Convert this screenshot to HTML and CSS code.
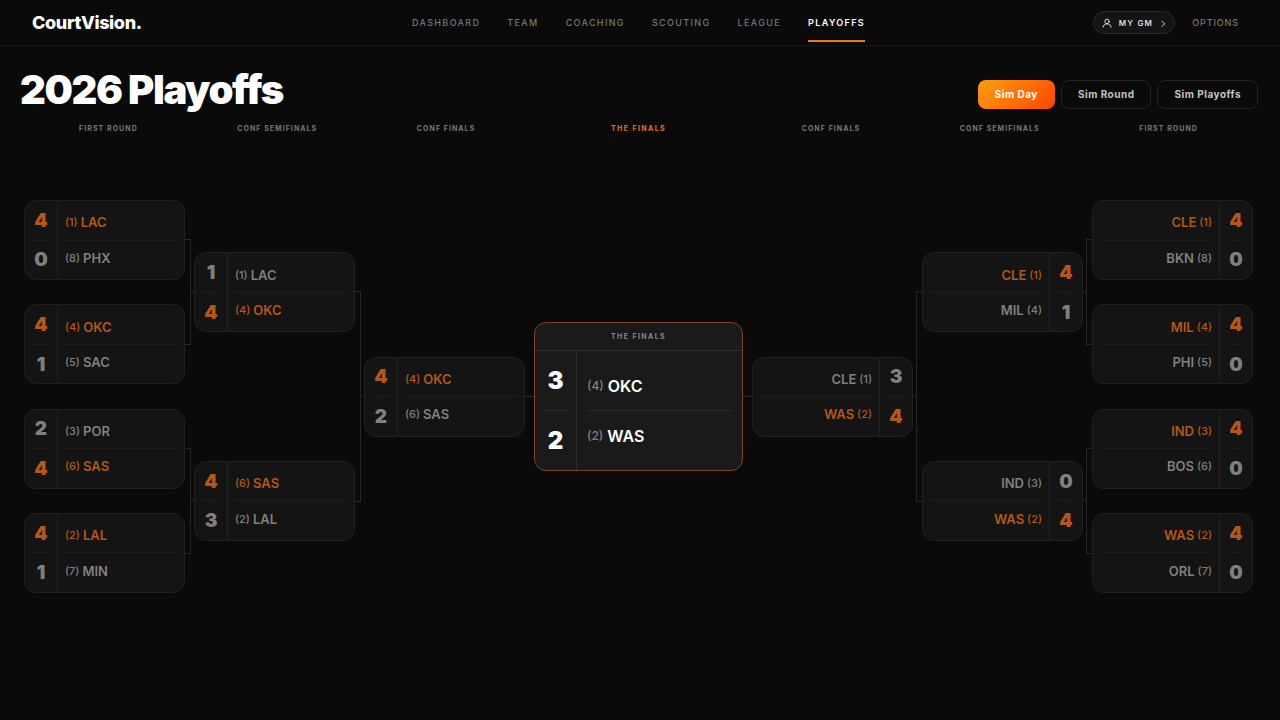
FILE: index.html
```
<!DOCTYPE html>
<html lang="en">

<head>
  <meta charset="UTF-8">
  <meta name="viewport" content="width=device-width, initial-scale=1.0">
  <title>CourtVision - 2026 Playoffs</title>
  <link rel="stylesheet" href="styles.css">
</head>

<body>

  <header class="topbar">
    <a class="logo" href="#">CourtVision.</a>
    <nav class="main-nav">
      <a href="#">Dashboard</a>
      <a href="#">Team</a>
      <a href="#">Coaching</a>
      <a href="#">Scouting</a>
      <a href="#">League</a>
      <a href="#" class="active">Playoffs</a>
    </nav>
    <div class="account">
      <button class="gm-button" type="button">
        <svg width="10" height="10" viewBox="0 0 10 10" fill="none" stroke="currentColor" stroke-linecap="round">
          <circle cx="5" cy="3.4" r="2.2" />
          <path d="M1 9.2C1.3 7.3 2.6 5.9 5 5.9S8.7 7.3 9 9.2" />
        </svg>
        My GM
        <svg width="6" height="8" viewBox="0 0 6 8" fill="none" stroke="currentColor" stroke-linecap="round" stroke-linejoin="round">
          <path d="M2 2.2L4.6 4.8L2 7.4" />
        </svg>
      </button>
      <a class="options" href="#">Options</a>
    </div>
  </header>

  <main>
    <div class="page-head">
      <h1>2026 Playoffs</h1>
      <div class="actions">
        <button class="btn primary" type="button">Sim Day</button>
        <button class="btn" type="button">Sim Round</button>
        <button class="btn" type="button">Sim Playoffs</button>
      </div>
    </div>

    <div class="round-labels">
      <span>First Round</span>
      <span>Conf Semifinals</span>
      <span>Conf Finals</span>
      <span class="current">The Finals</span>
      <span>Conf Finals</span>
      <span>Conf Semifinals</span>
      <span>First Round</span>
    </div>

    <div class="bracket">
      <!-- West -->
      <div class="round">
        <div class="series">
          <div class="scores"><b class="won">4</b><b>0</b></div>
          <div class="teams">
            <div class="team won"><small>(1)</small>LAC</div>
            <div class="team"><small>(8)</small>PHX</div>
          </div>
        </div>
        <div class="series">
          <div class="scores"><b class="won">4</b><b>1</b></div>
          <div class="teams">
            <div class="team won"><small>(4)</small>OKC</div>
            <div class="team"><small>(5)</small>SAC</div>
          </div>
        </div>
        <div class="series">
          <div class="scores"><b>2</b><b class="won">4</b></div>
          <div class="teams">
            <div class="team"><small>(3)</small>POR</div>
            <div class="team won"><small>(6)</small>SAS</div>
          </div>
        </div>
        <div class="series">
          <div class="scores"><b class="won">4</b><b>1</b></div>
          <div class="teams">
            <div class="team won"><small>(2)</small>LAL</div>
            <div class="team"><small>(7)</small>MIN</div>
          </div>
        </div>
      </div>

      <div class="joints">
        <div class="joint"></div>
        <div class="joint"></div>
      </div>

      <div class="round">
        <div class="series">
          <div class="scores"><b>1</b><b class="won">4</b></div>
          <div class="teams">
            <div class="team"><small>(1)</small>LAC</div>
            <div class="team won"><small>(4)</small>OKC</div>
          </div>
        </div>
        <div class="series">
          <div class="scores"><b class="won">4</b><b>3</b></div>
          <div class="teams">
            <div class="team won"><small>(6)</small>SAS</div>
            <div class="team"><small>(2)</small>LAL</div>
          </div>
        </div>
      </div>

      <div class="joints">
        <div class="joint tall"></div>
      </div>

      <div class="round">
        <div class="series">
          <div class="scores"><b class="won">4</b><b>2</b></div>
          <div class="teams">
            <div class="team won"><small>(4)</small>OKC</div>
            <div class="team"><small>(6)</small>SAS</div>
          </div>
        </div>
      </div>

      <div class="joints">
        <div class="line"></div>
      </div>

      <!-- Finals -->
      <div class="round">
        <section class="finals">
          <h2>The Finals</h2>
          <div class="finals-body">
            <div class="scores"><b>3</b><b>2</b></div>
            <div class="teams">
              <div class="team"><small>(4)</small>OKC</div>
              <div class="team"><small>(2)</small>WAS</div>
            </div>
          </div>
        </section>
      </div>

      <div class="joints">
        <div class="line"></div>
      </div>

      <!-- East -->
      <div class="round east">
        <div class="series">
          <div class="scores"><b>3</b><b class="won">4</b></div>
          <div class="teams">
            <div class="team"><small>(1)</small>CLE</div>
            <div class="team won"><small>(2)</small>WAS</div>
          </div>
        </div>
      </div>

      <div class="joints east">
        <div class="joint tall"></div>
      </div>

      <div class="round east">
        <div class="series">
          <div class="scores"><b class="won">4</b><b>1</b></div>
          <div class="teams">
            <div class="team won"><small>(1)</small>CLE</div>
            <div class="team"><small>(4)</small>MIL</div>
          </div>
        </div>
        <div class="series">
          <div class="scores"><b>0</b><b class="won">4</b></div>
          <div class="teams">
            <div class="team"><small>(3)</small>IND</div>
            <div class="team won"><small>(2)</small>WAS</div>
          </div>
        </div>
      </div>

      <div class="joints east">
        <div class="joint"></div>
        <div class="joint"></div>
      </div>

      <div class="round east">
        <div class="series">
          <div class="scores"><b class="won">4</b><b>0</b></div>
          <div class="teams">
            <div class="team won"><small>(1)</small>CLE</div>
            <div class="team"><small>(8)</small>BKN</div>
          </div>
        </div>
        <div class="series">
          <div class="scores"><b class="won">4</b><b>0</b></div>
          <div class="teams">
            <div class="team won"><small>(4)</small>MIL</div>
            <div class="team"><small>(5)</small>PHI</div>
          </div>
        </div>
        <div class="series">
          <div class="scores"><b class="won">4</b><b>0</b></div>
          <div class="teams">
            <div class="team won"><small>(3)</small>IND</div>
            <div class="team"><small>(6)</small>BOS</div>
          </div>
        </div>
        <div class="series">
          <div class="scores"><b class="won">4</b><b>0</b></div>
          <div class="teams">
            <div class="team won"><small>(2)</small>WAS</div>
            <div class="team"><small>(7)</small>ORL</div>
          </div>
        </div>
      </div>
    </div>
  </main>

</body>

</html>
```
FILE: styles.css
```
* {
  box-sizing: border-box;
}

body {
  margin: 0;
  background: #0a0a0a;
  color: #fff;
  font-family: Inter, "Liberation Sans", sans-serif;
}

a {
  color: inherit;
  text-decoration: none;
}

button {
  font-family: inherit;
  cursor: pointer;
}

/* Top bar */
.topbar {
  display: grid;
  grid-template-columns: 1fr auto 1fr;
  align-items: center;
  height: 46px;
  padding: 0 35px 0 32px;
  border-bottom: 1px solid #161616;
}

.logo {
  font-size: 18px;
  font-weight: 800;
  letter-spacing: -0.02em;
}

.main-nav {
  display: flex;
  gap: 27px;
}

.main-nav a,
.options {
  color: #777;
  font-size: 9px;
  font-weight: 500;
  line-height: 12px;
  letter-spacing: 0.15em;
  text-transform: uppercase;
}

.main-nav a {
  padding: 12px 0 11px;
  border: solid transparent;
  border-width: 2px 0;
}

.main-nav a.active {
  color: #fff;
  font-weight: 600;
  border-bottom-color: #f07a1c;
}

.account {
  display: flex;
  justify-content: flex-end;
  align-items: center;
  gap: 17px;
}

.gm-button {
  display: flex;
  align-items: center;
  gap: 7px;
  height: 23px;
  padding: 0 8px;
  background: #141414;
  border: 1px solid #2a2a2a;
  border-radius: 12px;
  color: #ddd;
  font-size: 8px;
  font-weight: 600;
  letter-spacing: 0.15em;
  text-transform: uppercase;
}

.account .options {
  padding-right: 6px;
  letter-spacing: 0.1em;
}

/* Page heading */
.page-head {
  display: flex;
  justify-content: space-between;
  align-items: center;
  padding: 20px 22px 9px 20px;
}

h1 {
  margin: 0;
  font-size: 40px;
  font-weight: 900;
  line-height: 48px;
  letter-spacing: -0.035em;
}

.actions {
  display: flex;
  gap: 6px;
  margin-top: 8px;
}

.btn {
  height: 29px;
  padding: 0 16px;
  background: transparent;
  border: 1px solid #222;
  border-radius: 8px;
  color: #c4c4c4;
  font-size: 10px;
  font-weight: 700;
  letter-spacing: 0.05em;
}

.btn.primary {
  background: linear-gradient(135deg, #ff9f0a, #ff4500) border-box;
  border-color: transparent;
  color: #fff;
}

.round-labels {
  display: grid;
  grid-template-columns: repeat(3, 1fr) 208px repeat(3, 1fr);
  gap: 8px;
  padding: 0 31px 0 28px;
  color: #777;
  font-size: 7px;
  font-weight: 700;
  line-height: 12px;
  letter-spacing: 0.15em;
  text-align: center;
  text-transform: uppercase;
}

.round-labels .current {
  color: #e8731f;
  letter-spacing: 0.2em;
}

/* Bracket */
.bracket {
  display: grid;
  grid-template-columns: repeat(3, 1fr 9px) 209px repeat(3, 9px 1fr);
  grid-template-rows: 417px;
  padding: 53px 27px 24px 24px;
}

.round,
.joints {
  display: flex;
  flex-direction: column;
  justify-content: space-around;
}

.series {
  display: flex;
  height: 80px;
  background: #141414;
  border: 1px solid #202020;
  border-radius: 12px;
  color: #808080;
}

.scores {
  display: flex;
  flex-direction: column;
  width: 33px;
  padding: 0 8px;
  border-right: 1px solid #222;
}

.scores b {
  display: flex;
  flex: 1;
  justify-content: center;
  align-items: center;
  font-size: 19px;
  font-weight: 900;
}

.scores b + b,
.team + .team {
  border-top: 1px solid #1f1f1f;
}

.teams {
  display: flex;
  flex: 1;
  flex-direction: column;
  padding: 4px 7px;
}

.team {
  display: flex;
  flex: 1;
  align-items: center;
  gap: 3px;
  font-size: 13px;
  font-weight: 600;
}

.team small {
  font-size: 11px;
  font-weight: 500;
}

.won {
  color: #b5571a;
}

.east .series,
.east .team {
  flex-direction: row-reverse;
}

.east .scores {
  border-right: 0;
  border-left: 1px solid #222;
}

/* Lines between the rounds */
.joint {
  display: flex;
  align-items: center;
  height: 25%;
}

.joint.tall {
  height: 50%;
}

.joint::before {
  content: "";
  width: 5px;
  height: 100%;
  border: 1px solid #262626;
  border-left: 0;
}

.joint::after {
  content: "";
  flex: 1;
  height: 1px;
  background: #262626;
}

.joints.east .joint {
  flex-direction: row-reverse;
}

.joints.east .joint::before {
  border-left: 1px solid #262626;
  border-right: 0;
}

.line {
  height: 1px;
  background: #2a2a2a;
}

/* Finals */
.finals {
  height: 149px;
  display: flex;
  flex-direction: column;
  background: #1a1a1a;
  border: 1px solid #84401a;
  border-radius: 12px;
}

.finals h2 {
  margin: 0;
  border-bottom: 1px solid #2c2c2c;
  color: #888;
  font-size: 7px;
  font-weight: 700;
  line-height: 27px;
  letter-spacing: 0.2em;
  text-align: center;
  text-transform: uppercase;
}

.finals-body {
  display: flex;
  flex: 1;
}

.finals .scores {
  width: 42px;
  border-color: #2c2c2c;
}

.finals .scores b {
  font-size: 24px;
}

.finals .scores b + b,
.finals .team + .team {
  border-color: #2c2c2c;
}

.finals .teams {
  padding: 10px;
}

.finals .team {
  gap: 4px;
  font-size: 16px;
}

.finals small {
  color: #808080;
  font-size: 12px;
}
```
